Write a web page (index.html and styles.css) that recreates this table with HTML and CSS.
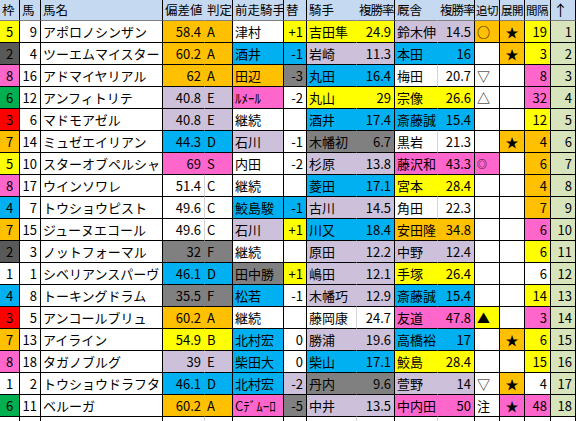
FILE: index.html
```html
<!DOCTYPE html>
<html lang="ja">
<head>
  <meta charset="UTF-8" />
  <meta name="viewport" content="width=device-width, initial-scale=1.0"/>
  <title>出馬表</title>
  <link rel="stylesheet" href="styles.css">
</head>
<body>

<table class="race">
  <colgroup>
    <col style="width:20px"><col style="width:21px"><col style="width:122px">
    <col style="width:42px"><col style="width:28px"><col style="width:51px">
    <col style="width:23px"><col style="width:50px"><col style="width:38px">
    <col style="width:43px"><col style="width:37px"><col style="width:25px">
    <col style="width:25px"><col style="width:26px"><col style="width:25px">
  </colgroup>
  <thead>
    <tr>
      <th>枠</th><th>馬</th><th>馬名</th><th class="pl">偏差値</th><th>判定</th>
      <th>前走騎手</th><th>替</th><th class="pl">騎手</th><th class="tight">複勝率</th>
      <th class="pl">厩舎</th><th class="tight">複勝率</th><th class="nar">追切</th><th class="nar">展開</th><th class="nar">間隔</th><th class="up">↑</th>
    </tr>
  </thead>
  <tbody>
    <tr><td class="y">5</td><td>9</td><td>アポロノシンザン</td><td class="o pl">58.4</td><td class="o">A</td><td>津村</td><td class="y">+1</td><td class="y pl">吉田隼</td><td class="y">24.9</td><td class="p pl">鈴木伸</td><td class="p">14.5</td><td class="o">○</td><td class="o">★</td><td class="y">19</td><td>1</td></tr>
    <tr><td class="dg">2</td><td>4</td><td>ツーエムマイスター</td><td class="o pl">60.2</td><td class="o">A</td><td class="b">酒井</td><td class="b">-1</td><td class="p pl">岩崎</td><td class="p">11.3</td><td class="b pl">本田</td><td class="b">16</td><td></td><td class="o">★</td><td class="y">3</td><td>2</td></tr>
    <tr><td class="k">8</td><td>16</td><td>アドマイヤリアル</td><td class="o pl">62</td><td class="o">A</td><td class="o">田辺</td><td class="g">-3</td><td class="b pl">丸田</td><td class="b">16.4</td><td class="pl">梅田</td><td>20.7</td><td>▽</td><td></td><td class="k">8</td><td>3</td></tr>
    <tr><td class="gr">6</td><td>12</td><td>アンフィトリテ</td><td class="p pl">40.8</td><td class="p">E</td><td class="k">ﾙﾒｰﾙ</td><td>-2</td><td class="y pl">丸山</td><td class="y">29</td><td class="y pl">宗像</td><td class="y">26.6</td><td>△</td><td></td><td class="k">32</td><td>4</td></tr>
    <tr><td class="r">3</td><td>6</td><td>マドモアゼル</td><td class="p pl">40.8</td><td class="p">E</td><td>継続</td><td></td><td class="b pl">酒井</td><td class="b">17.4</td><td class="b pl">斎藤誠</td><td class="b">15.4</td><td></td><td></td><td class="y">12</td><td>5</td></tr>
    <tr><td class="o">7</td><td>14</td><td>ミュゼエイリアン</td><td class="b pl">44.3</td><td class="b">D</td><td class="p">石川</td><td>-1</td><td class="g pl">木幡初</td><td class="g">6.7</td><td class="pl">黒岩</td><td>21.3</td><td></td><td class="o">★</td><td class="o">4</td><td>6</td></tr>
    <tr><td class="y">5</td><td>10</td><td>スターオブペルシャ</td><td class="k pl">69</td><td class="k">S</td><td>内田</td><td>-2</td><td class="p pl">杉原</td><td class="p">13.8</td><td class="k pl">藤沢和</td><td class="k">43.3</td><td class="k small">◎</td><td></td><td class="o">6</td><td>7</td></tr>
    <tr><td class="k">8</td><td>17</td><td>ウインソワレ</td><td class="pl">51.4</td><td>C</td><td>継続</td><td></td><td class="b pl">菱田</td><td class="b">17.1</td><td class="y pl">宮本</td><td class="y">28.4</td><td></td><td></td><td class="o">4</td><td>8</td></tr>
    <tr><td class="b">4</td><td>7</td><td>トウショウピスト</td><td class="pl">49.6</td><td>C</td><td class="b">鮫島駿</td><td class="b">-1</td><td class="p pl">古川</td><td class="p">14.5</td><td class="pl">角田</td><td>22.3</td><td></td><td></td><td class="o">7</td><td>9</td></tr>
    <tr><td class="o">7</td><td>15</td><td>ジューヌエコール</td><td class="pl">49.6</td><td>C</td><td class="p">石川</td><td class="y">+1</td><td class="b pl">川又</td><td class="b">18.4</td><td class="o pl">安田隆</td><td class="o">34.8</td><td></td><td></td><td class="k">6</td><td>10</td></tr>
    <tr><td class="dg">2</td><td>3</td><td>ノットフォーマル</td><td class="g pl">32</td><td class="g">F</td><td>継続</td><td></td><td class="p pl">原田</td><td class="p">12.2</td><td class="p pl">中野</td><td class="p">12.4</td><td></td><td></td><td class="y">6</td><td>11</td></tr>
    <tr><td>1</td><td>1</td><td>シベリアンスパーヴ</td><td class="b pl">46.1</td><td class="b">D</td><td class="g">田中勝</td><td class="y">+1</td><td class="p pl">嶋田</td><td class="p">12.1</td><td class="y pl">手塚</td><td class="y">26.4</td><td></td><td></td><td>6</td><td>12</td></tr>
    <tr><td class="b">4</td><td>8</td><td>トーキングドラム</td><td class="g pl">35.5</td><td class="g">F</td><td class="b">松若</td><td>-1</td><td class="p pl">木幡巧</td><td class="p">12.9</td><td class="b pl">斎藤誠</td><td class="b">15.4</td><td></td><td></td><td class="y">14</td><td>13</td></tr>
    <tr><td class="r">3</td><td>5</td><td>アンコールブリュ</td><td class="o pl">60.2</td><td class="o">A</td><td>継続</td><td></td><td class="pl">藤岡康</td><td>24.7</td><td class="k pl">友道</td><td class="k">47.8</td><td class="y">▲</td><td></td><td class="k">3</td><td>14</td></tr>
    <tr><td class="o">7</td><td>13</td><td>アイライン</td><td class="y pl">54.9</td><td class="y">B</td><td class="b">北村宏</td><td>0</td><td class="p pl">勝浦</td><td class="p">19.6</td><td class="b pl">高橋裕</td><td class="b">17</td><td></td><td class="o">★</td><td class="y">6</td><td>15</td></tr>
    <tr><td class="k">8</td><td>18</td><td>タガノブルグ</td><td class="p pl">39</td><td class="p">E</td><td class="b">柴田大</td><td>0</td><td class="b pl">柴山</td><td class="b">17.1</td><td class="y pl">鮫島</td><td class="y">28.4</td><td></td><td></td><td class="y">15</td><td>16</td></tr>
    <tr><td>1</td><td>2</td><td>トウショウドラフタ</td><td class="b pl">46.1</td><td class="b">D</td><td class="b">北村宏</td><td class="p">-2</td><td class="g pl">丹内</td><td class="g">9.6</td><td class="p pl">萱野</td><td class="p">14</td><td>▽</td><td class="o">★</td><td>4</td><td>17</td></tr>
    <tr><td class="gr">6</td><td>11</td><td>ベルーガ</td><td class="o pl">60.2</td><td class="o">A</td><td class="k">Cﾃﾞﾑｰﾛ</td><td class="g">-5</td><td class="p pl">中井</td><td class="p">13.5</td><td class="k pl">中内田</td><td class="k">50</td><td>注</td><td class="k">★</td><td class="k">48</td><td>18</td></tr>
    <tr class="blank"><td></td><td></td><td></td><td class="pl"></td><td></td><td></td><td></td><td class="pl"></td><td></td><td class="pl"></td><td></td><td></td><td></td><td></td><td></td></tr>
  </tbody>
</table>

</body>
</html>
```

FILE: styles.css
```css
body {
  margin: 0;
  background: #fff;
  overflow: hidden;
  font-family: "Noto Sans CJK JP", "Noto Sans", sans-serif;
  color: #000;
}

.race {
  table-layout: fixed;
  width: 576px;
  border-collapse: separate;
  border-spacing: 0;
  font-size: 13px;
  line-height: 20px;
}

.race th,
.race td {
  border-right: 1px solid #000;
  border-bottom: 1px solid #000;
  padding: 0 2px;
  white-space: nowrap;
  overflow: hidden;
  text-align: left;
  font-weight: normal;
}

.race th {
  height: 20px;
  background: #c5d9f1;
  font-size: 12.5px;
  padding: 0 1px 0 2px;
  border-bottom-color: #7f7f7f;
}

.race th.tight {
  letter-spacing: -1px;
  text-align: right;
}

.race th.nar {
  font-size: 11.5px;
  letter-spacing: -0.5px;
  padding: 0 0 0 1px;
}

.race th.up {
  font-size: 15px;
}

.race td {
  height: 21px;
  background: #fff;
}

/* numeric columns */
.race td:nth-child(1) { text-align: center; }
.race td:nth-child(2),
.race td:nth-child(4),
.race td:nth-child(7),
.race td:nth-child(9),
.race td:nth-child(11),
.race td:nth-child(14),
.race td:nth-child(15) {
  text-align: right;
  padding-right: 3px;
}
.race td:nth-child(13) { text-align: center; }
.race td:nth-child(15) { background: #d8e4bc; }
.race tr.blank td:nth-child(15) { background: #fff; }

/* paired cells share one fill, only a grid line between them */
.race .pl { border-right-color: #d4d4d4; }
.race th.pl,
.race .pl.y, .race .pl.o, .race .pl.p, .race .pl.b,
.race .pl.g, .race .pl.k {
  border-right-color: transparent;
}

.race .small { font-size: 10px; }

/* fills */
.y  { background: #ffff00 !important; }
.o  { background: #ffc000 !important; }
.p  { background: #ccc0da !important; }
.b  { background: #00b0f0 !important; }
.g  { background: #808080 !important; }
.k  { background: #ff66cc !important; }
.dg { background: #595959 !important; }
.gr { background: #00b050 !important; }
.r  { background: #ff0000 !important; }
```
